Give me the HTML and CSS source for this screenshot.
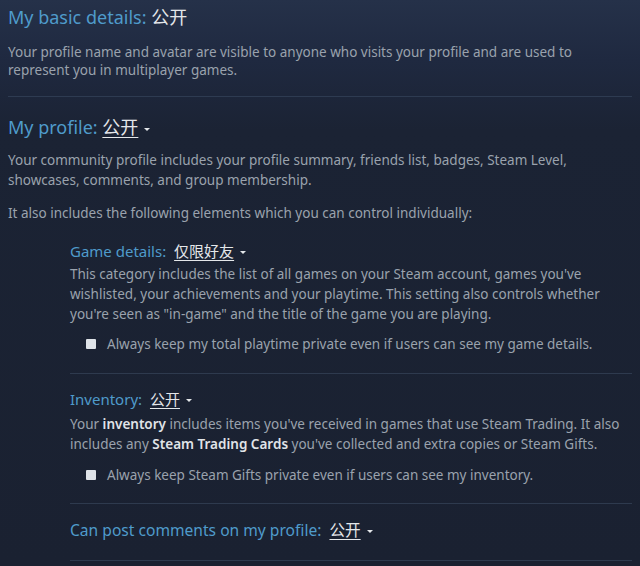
FILE: index.html
```html
<!DOCTYPE html>
<html lang="en">
<head>
  <meta charset="UTF-8" />
  <title>Privacy Settings</title>
  <link rel="stylesheet" href="styles.css">
</head>
<body>
  <div class="privacy">
    <div class="block">
      <h2 class="setting">My basic details: <span class="state">公开</span></h2>
      <p>Your profile name and avatar are visible to anyone who visits your profile and are used to represent you in multiplayer games.</p>
    </div>

    <div class="block top-line">
      <h2 class="setting">My profile: <span class="state drop">公开</span><span class="caret"></span></h2>
      <p>Your community profile includes your profile summary, friends list, badges, Steam Level, showcases, comments, and group membership.</p>
      <p class="gap">It also includes the following elements which you can control individually:</p>

      <div class="sub">
        <div class="sub-block">
          <h3 class="setting">Game details: <span class="state drop">仅限好友</span><span class="caret"></span></h3>
          <p>This category includes the list of all games on your Steam account, games you've wishlisted, your achievements and your playtime. This setting also controls whether you're seen as "in-game" and the title of the game you are playing.</p>
          <label class="check"><span class="box"></span>Always keep my total playtime private even if users can see my game details.</label>
        </div>

        <div class="sub-block line">
          <h3 class="setting">Inventory: <span class="state drop">公开</span><span class="caret"></span></h3>
          <p>Your <b>inventory</b> includes items you've received in games that use Steam Trading. It also includes any <b>Steam Trading Cards</b> you've collected and extra copies or Steam Gifts.</p>
          <label class="check"><span class="box"></span>Always keep Steam Gifts private even if users can see my inventory.</label>
        </div>

        <div class="sub-block line last">
          <h3 class="setting">Can post comments on my profile: <span class="state drop">公开</span><span class="caret"></span></h3>
        </div>
      </div>
    </div>
  </div>
</body>
</html>
```

FILE: styles.css
```css
body {
  margin: 0;
  background: #1b2334;
  background-image: linear-gradient(180deg, #253149 0px, #1f2940 60px, #1b2334 130px, #1a2131 566px);
  font-family: "Noto Sans", "Noto Sans CJK SC", sans-serif;
  color: #9aa2ad;
  height: 566px;
  overflow: hidden;
}
.privacy {
  padding: 5px 8px 0 8px;
}
.setting {
  margin: 0;
  font-weight: normal;
  color: #4f9bcb;
  font-size: 18px;
  line-height: 24px;
}
h3.setting {
  font-size: 15px;
  line-height: 20px;
}
.state {
  color: #e4e7ea;
}
h3 .state {
  margin-left: 4px;
}
.drop {
  text-decoration: underline;
  text-underline-offset: 3px;
  text-decoration-thickness: 1px;
}
.caret {
  display: inline-block;
  width: 0;
  height: 0;
  margin-left: 6px;
  vertical-align: middle;
  border-left: 3px solid transparent;
  border-right: 3px solid transparent;
  border-top: 3px solid #e4e7ea;
}
p {
  margin: 11px 0 0 0;
  font-size: 13.5px;
  line-height: 20px;
}
.block:first-child p {
  margin-top: 14px;
  line-height: 18px;
}
p.gap {
  margin-top: 13px;
}
b {
  color: #e0e4e8;
  font-weight: 600;
}
.block {
  padding-bottom: 17px;
}
.top-line {
  border-top: 1px solid #2e3b51;
  padding-top: 18px;
}
.sub {
  margin: 18px 0 0 62px;
}
.sub-block {
  padding-bottom: 19px;
}
.sub-block p {
  margin-top: 3px;
}
.line {
  border-top: 1px solid #2e3a4e;
  padding-top: 15px;
  padding-bottom: 18px;
}
.line p {
  margin-top: 5px;
}
.last {
  border-bottom: 1px solid #2e3a4e;
  padding-top: 15px;
  padding-bottom: 19px;
}
.last .setting {
  font-size: 15.6px;
  line-height: 22px;
}
.check {
  display: flex;
  align-items: center;
  margin: 10px 0 0 16px;
  font-size: 13.5px;
  line-height: 20px;
}
.line .check {
  margin-top: 11px;
}
.box {
  width: 10px;
  height: 10px;
  background: #dfe3e8;
  border-radius: 1px;
  margin-right: 11px;
}
```
